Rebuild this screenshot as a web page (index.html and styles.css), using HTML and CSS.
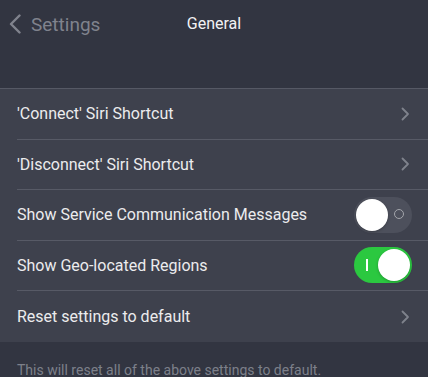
FILE: index.html
```html
<!DOCTYPE html>
<html lang="en">
<head>
    <meta charset="UTF-8">
    <meta name="viewport" content="width=device-width, initial-scale=1.0">
    <title>General</title>
    <link rel="stylesheet" href="styles.css">
</head>
<body>
    <div class="nav-bar">
        <div class="back-button">
            <svg class="back-chevron" width="14" height="20" viewBox="0 0 14 20">
                <path d="M11.5 1.5 L3 10 L11.5 18.5" fill="none" stroke="currentColor" stroke-width="2.4" stroke-linecap="round" stroke-linejoin="round"/>
            </svg>
            <span>Settings</span>
        </div>
        <div class="nav-title">General</div>
    </div>

    <div class="settings-list">
        <div class="settings-row">
            <span class="row-label">'Connect' Siri Shortcut</span>
            <svg class="row-chevron" width="9" height="14" viewBox="0 0 9 14">
                <path d="M1.5 1.5 L7 7 L1.5 12.5" fill="none" stroke="currentColor" stroke-width="1.8" stroke-linecap="round" stroke-linejoin="round"/>
            </svg>
        </div>
        <div class="settings-row">
            <span class="row-label">'Disconnect' Siri Shortcut</span>
            <svg class="row-chevron" width="9" height="14" viewBox="0 0 9 14">
                <path d="M1.5 1.5 L7 7 L1.5 12.5" fill="none" stroke="currentColor" stroke-width="1.8" stroke-linecap="round" stroke-linejoin="round"/>
            </svg>
        </div>
        <div class="settings-row">
            <span class="row-label">Show Service Communication Messages</span>
            <div class="toggle">
                <div class="toggle-knob"></div>
                <div class="toggle-off-mark"></div>
            </div>
        </div>
        <div class="settings-row">
            <span class="row-label">Show Geo-located Regions</span>
            <div class="toggle toggle-on">
                <div class="toggle-on-mark"></div>
                <div class="toggle-knob"></div>
            </div>
        </div>
        <div class="settings-row last-row">
            <span class="row-label">Reset settings to default</span>
            <svg class="row-chevron" width="9" height="14" viewBox="0 0 9 14">
                <path d="M1.5 1.5 L7 7 L1.5 12.5" fill="none" stroke="currentColor" stroke-width="1.8" stroke-linecap="round" stroke-linejoin="round"/>
            </svg>
        </div>
    </div>

    <p class="footer-note">This will reset all of the above settings to default.</p>
</body>
</html>
```

FILE: styles.css
```css
body {
    margin: 0;
    padding: 0;
    background-color: #323541;
    font-family: Roboto, "Liberation Sans", sans-serif;
    width: 428px;
    height: 377px;
    overflow: hidden;
}
.nav-bar {
    display: flex;
    align-items: center;
    height: 48px;
    padding: 0 0 0 8px;
    margin-bottom: 40px;
    position: relative;
}
.back-button {
    display: flex;
    align-items: center;
    gap: 9px;
    color: #80838d;
    font-size: 19px;
}
.back-chevron {
    display: block;
}
.nav-title {
    position: absolute;
    left: 0;
    right: 0;
    top: 14px;
    text-align: center;
    color: #f2f2f4;
    font-size: 16px;
    pointer-events: none;
}
.settings-list {
    background-color: #3e414d;
    border-top: 1px solid #565965;
}
.settings-row {
    display: flex;
    align-items: center;
    justify-content: space-between;
    height: 50.5px;
    margin-left: 17px;
    padding-right: 17px;
    border-bottom: 1px solid #575a66;
    box-sizing: border-box;
}
.settings-row.last-row {
    border-bottom: none;
    height: 51px;
}
.row-label {
    color: #ececee;
    font-size: 16px;
}
.row-chevron {
    color: #7f828c;
    margin-right: 1px;
}
.toggle {
    position: relative;
    width: 58px;
    height: 36px;
    border-radius: 18px;
    background-color: #4d505c;
    margin-right: -1px;
}
.toggle-knob {
    position: absolute;
    top: 2px;
    left: 2px;
    width: 32px;
    height: 32px;
    border-radius: 50%;
    background-color: #ffffff;
    box-shadow: 0 1px 3px rgba(0, 0, 0, 0.25);
}
.toggle-on {
    background-color: #2bc840;
}
.toggle-on .toggle-knob {
    left: 24px;
}
.toggle-off-mark {
    position: absolute;
    top: 12.5px;
    right: 8.5px;
    width: 8px;
    height: 8px;
    border: 1.5px solid #a3a5ab;
    border-radius: 50%;
}
.toggle-on-mark {
    position: absolute;
    top: 12px;
    left: 12px;
    width: 1.5px;
    height: 12px;
    background-color: #ffffff;
}
.footer-note {
    margin: 0;
    padding: 20px 17px 0;
    color: #7d808a;
    font-size: 14px;
}
```
